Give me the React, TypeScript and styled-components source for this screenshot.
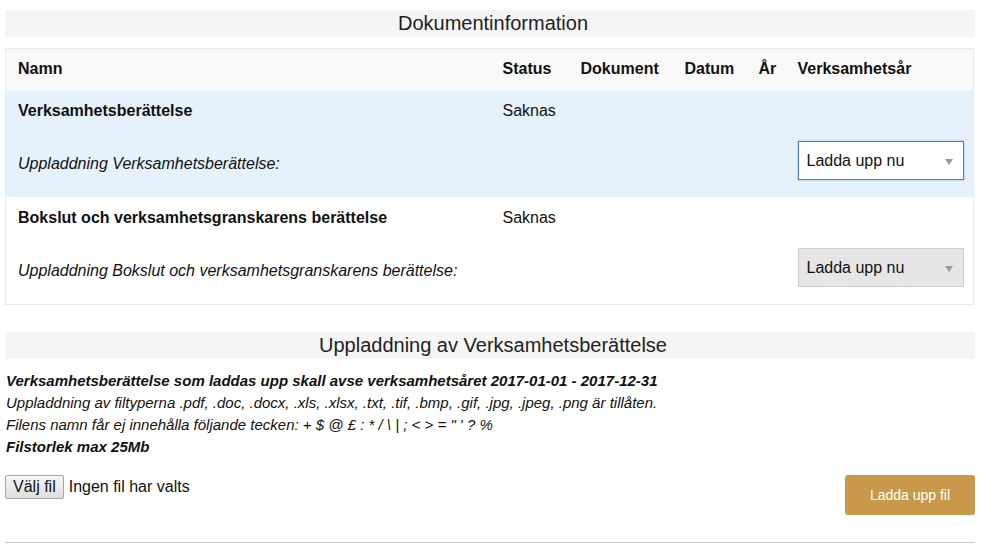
import React from "react";
import styled, { createGlobalStyle } from "styled-components";

const GlobalStyle = createGlobalStyle`
    body {
        margin: 0;
        background: #fff;
        font-family: "Liberation Sans", Arial, sans-serif;
        color: #111;
    }
`;

type Doc = {
    name: string;
    status: string;
    active: boolean;
};

const docs: Doc[] = [
    { name: "Verksamhetsberättelse", status: "Saknas", active: true },
    { name: "Bokslut och verksamhetsgranskarens berättelse", status: "Saknas", active: false },
];

const Page = styled.div`
    padding: 10px 6px 0 5px;
`;

const SectionTitle = styled.h2`
    margin: 0;
    height: 27px;
    line-height: 27px;
    padding-left: 6px;
    background: #f5f5f5;
    text-align: center;
    font-size: 20px;
    font-weight: normal;
    color: #222;
`;

const Table = styled.table`
    width: 969px;
    margin: 11px 0 27px 0;
    border-collapse: collapse;
    table-layout: fixed;
    border: 1px solid #e9e9e9;
    font-size: 16px;
`;

const HeadRow = styled.tr`
    background: #f9f9f9;
    height: 41px;
`;

const Th = styled.th`
    text-align: left;
    padding: 0 12px;
    font-weight: bold;
    white-space: nowrap;
`;

const Row = styled.tr<{ $active: boolean }>`
    background: ${(p) => (p.$active ? "#e6f2fb" : "#fff")};
`;

const NameCell = styled.td`
    padding: 0 12px;
    height: 43px;
    font-weight: bold;
    vertical-align: middle;
`;

const Cell = styled.td`
    padding: 0 12px;
    vertical-align: middle;
`;

const LabelCell = styled.td`
    padding: 0 12px 2px 12px;
    height: 62px;
    font-style: italic;
    vertical-align: middle;
`;

const SelectCell = styled.td`
    padding: 0 11px 8px 12px;
    vertical-align: middle;
`;

const Select = styled.div<{ $focused: boolean }>`
    position: relative;
    box-sizing: border-box;
    height: 39px;
    width: 166px;
    display: flex;
    align-items: center;
    padding-left: 8px;
    font-size: 16px;
    color: #111;
    background: ${(p) => (p.$focused ? "#fff" : "#e6e6e6")};
    border: 1px solid ${(p) => (p.$focused ? "#4a78d6" : "#cfcfcf")};
    box-shadow: ${(p) => (p.$focused ? "0 0 2px rgba(74,120,214,0.6)" : "none")};

    &::after {
        content: "";
        position: absolute;
        right: 10px;
        top: 17px;
        border-left: 4px solid transparent;
        border-right: 4px solid transparent;
        border-top: 6px solid #999;
    }
`;

const Info = styled.div`
    padding: 11px 0 0 1px;
    font-size: 15px;
    line-height: 22px;
    font-style: italic;
    color: #111;
`;

const Strong = styled.div`
    font-weight: bold;
`;

const UploadRow = styled.div`
    display: flex;
    justify-content: space-between;
    align-items: flex-start;
    margin-top: 17px;
    padding-bottom: 27px;
    border-bottom: 1px solid #c8c8c8;
`;

const FilePicker = styled.div`
    display: flex;
    align-items: center;
    gap: 5px;
    font-size: 16px;
    color: #111;
`;

const FileButton = styled.button`
    height: 24px;
    padding: 0 7px;
    font-family: inherit;
    font-size: 16px;
    color: #111;
    border: 1px solid #a6a6a6;
    border-radius: 2px;
    background: linear-gradient(#f6f6f6, #dedede);
`;

const UploadButton = styled.button`
    width: 130px;
    height: 40px;
    border: none;
    border-radius: 3px;
    background: #c8994b;
    color: #fff;
    font-family: inherit;
    font-size: 14px;
`;

export default function App() {
    return (
        <Page>
            <GlobalStyle />
            <SectionTitle>Dokumentinformation</SectionTitle>
            <Table>
                <colgroup>
                    <col style={{ width: 485 }} />
                    <col style={{ width: 78 }} />
                    <col style={{ width: 104 }} />
                    <col style={{ width: 74 }} />
                    <col style={{ width: 39 }} />
                    <col />
                </colgroup>
                <thead>
                    <HeadRow>
                        <Th>Namn</Th>
                        <Th>Status</Th>
                        <Th>Dokument</Th>
                        <Th>Datum</Th>
                        <Th>År</Th>
                        <Th>Verksamhetsår</Th>
                    </HeadRow>
                </thead>
                <tbody>
                    {docs.map((doc) => (
                        <React.Fragment key={doc.name}>
                            <Row $active={doc.active}>
                                <NameCell>{doc.name}</NameCell>
                                <Cell>{doc.status}</Cell>
                                <Cell />
                                <Cell />
                                <Cell />
                                <Cell />
                            </Row>
                            <Row $active={doc.active}>
                                <LabelCell colSpan={5}>Uppladdning {doc.name}:</LabelCell>
                                <SelectCell>
                                    <Select $focused={doc.active}>Ladda upp nu</Select>
                                </SelectCell>
                            </Row>
                        </React.Fragment>
                    ))}
                </tbody>
            </Table>
            <SectionTitle>Uppladdning av Verksamhetsberättelse</SectionTitle>
            <Info>
                <Strong>Verksamhetsberättelse som laddas upp skall avse verksamhetsåret 2017-01-01 - 2017-12-31</Strong>
                <div>Uppladdning av filtyperna .pdf, .doc, .docx, .xls, .xlsx, .txt, .tif, .bmp, .gif, .jpg, .jpeg, .png är tillåten.</div>
                <div>Filens namn får ej innehålla följande tecken: + $ @ £ : * / \ | ; &lt; &gt; = " ' ? %</div>
                <Strong>Filstorlek max 25Mb</Strong>
            </Info>
            <UploadRow>
                <FilePicker>
                    <FileButton>Välj fil</FileButton>
                    <span>Ingen fil har valts</span>
                </FilePicker>
                <UploadButton>Ladda upp fil</UploadButton>
            </UploadRow>
        </Page>
    );
}
